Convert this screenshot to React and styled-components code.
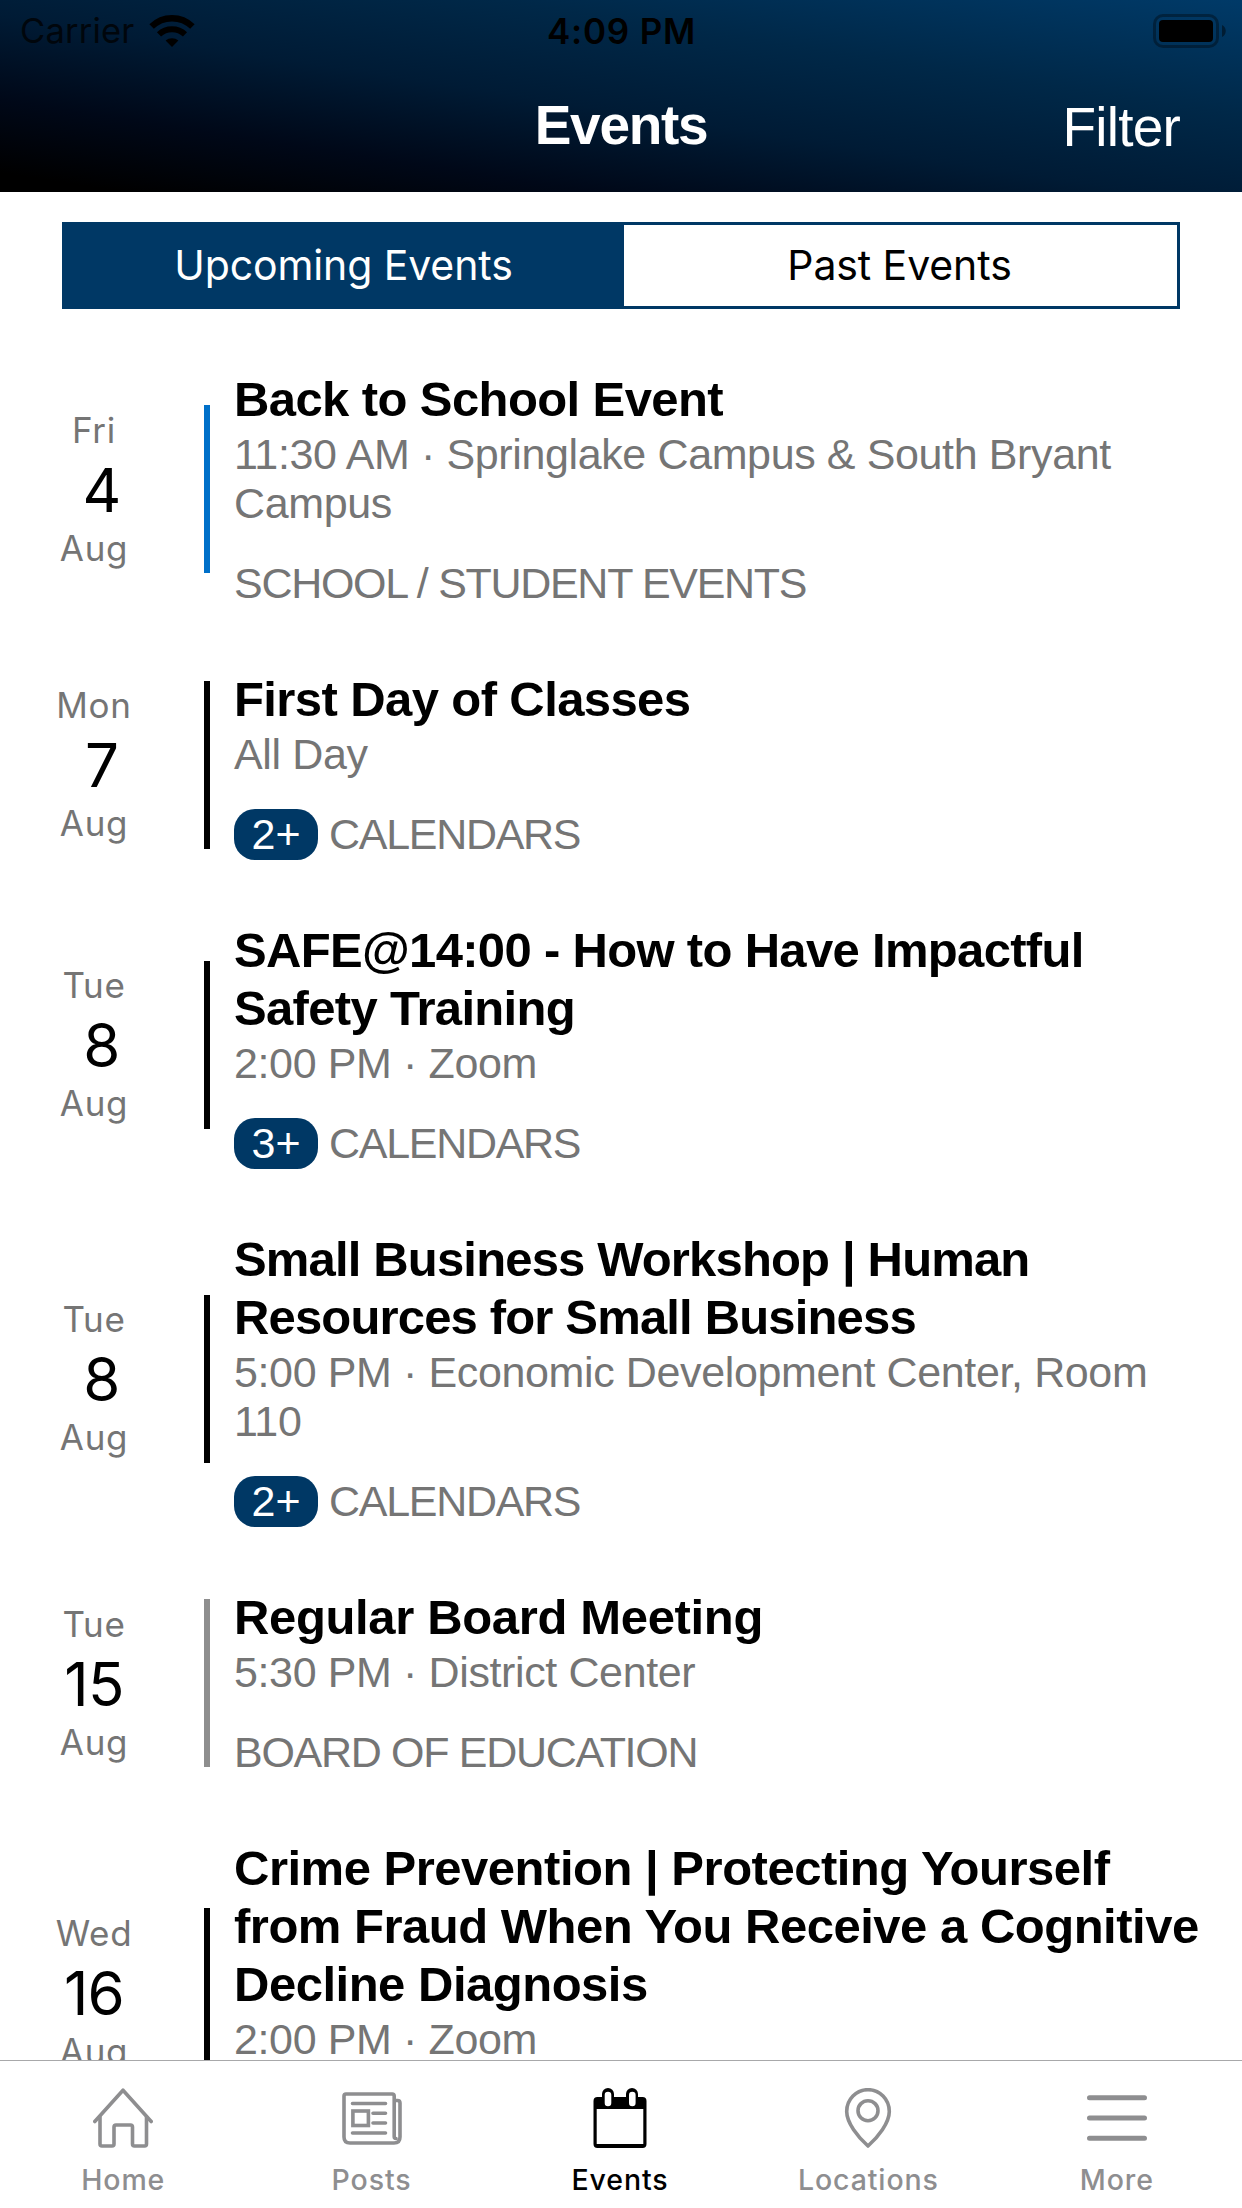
import React from "react";
import styled, { createGlobalStyle } from "styled-components";

const sans = `Inter, Roboto, sans-serif`;
const helv = `"Liberation Sans", Arial, sans-serif`;
const navy = "#003865";

const Global = createGlobalStyle`
  *{box-sizing:border-box}
  body{margin:0;background:#fff}
`;

const Screen = styled.div`
  width: 1242px;
  height: 2208px;
  display: flex;
  flex-direction: column;
  overflow: hidden;
  background: #fff;
  font-family: ${sans};
`;

const Header = styled.header`
  flex: none;
  height: 192px;
  background: linear-gradient(to top right, #000 5%, #000818 24%, #001b35 46%, #002848 70%, #003a68 100%);
`;

const StatusBar = styled.div`
  height: 60px;
  display: grid;
  grid-template-columns: 1fr auto 1fr;
  align-items: center;
  padding: 0 15px 0 20px;
  color: #000;
`;

const Carrier = styled.div`
  display: flex;
  align-items: center;
  gap: 14px;
  font-size: 34.5px;
  line-height: 62px;
  letter-spacing: 0.2px;
  color: #00060c;
`;

const Clock = styled.div`
  padding-right: 4px;
  font-size: 35px;
  font-weight: 600;
  line-height: 62px;
  letter-spacing: 0.8px;
`;

const StatusRight = styled.div`
  display: flex;
  justify-content: flex-end;
`;

const NavBar = styled.div`
  height: 132px;
  display: grid;
  grid-template-columns: 1fr auto 1fr;
  align-items: center;
  padding: 0 62px;
  color: #fff;
  font-family: ${helv};
`;

const NavTitle = styled.h1`
  grid-column: 2;
  margin: 0;
  font-size: 55px;
  font-weight: 700;
  line-height: 130px;
  padding-bottom: 2px;
  letter-spacing: -1.3px;
`;

const NavAction = styled.div`
  justify-self: end;
  padding-top: 3px;
  font-size: 55px;
  line-height: 129px;
  letter-spacing: -0.8px;
`;

const Segments = styled.div`
  flex: none;
  margin: 30px 62px 0;
  height: 87px;
  display: grid;
  grid-template-columns: 559px 1fr;
  border: 3px solid ${navy};
`;

const Segment = styled.div`
  display: flex;
  align-items: center;
  justify-content: center;
  padding: 0 2px 1px 0;
  font-size: 41px;
  letter-spacing: -0.1px;
  color: ${(p) => (p.$active ? "#fff" : "#000")};
  background: ${(p) => (p.$active ? navy : "#fff")};
`;

const List = styled.main`
  flex: 1;
  min-height: 0;
  overflow: hidden;
  padding-top: 29.75px;
`;

const Row = styled.article`
  display: grid;
  grid-template-columns: 188px 22px 1fr;
  align-items: center;
  padding: 31px 20px 30.1px 0;
`;

const DateBox = styled.div`
  display: flex;
  flex-direction: column;
  align-items: center;
  color: #757575;
  font-size: 35px;
  letter-spacing: 0.7px;
  line-height: 43px;
`;

const Day = styled.div`
  padding: 1px 0 0 ${(p) => (p.$single ? "15px" : "0")};
  font-size: 60px;
  line-height: 74px;
  letter-spacing: -0.8px;
  color: #000;
`;

const Bar = styled.div`
  width: 6px;
  height: 168px;
  justify-self: end;
  background: ${(p) => p.$color};
`;

const Info = styled.div`
  padding-left: 24px;
  font-family: ${helv};
  color: #757575;
`;

const Title = styled.h2`
  margin: 0;
  font-size: 49px;
  font-weight: 700;
  line-height: 58px;
  letter-spacing: ${(p) => p.$tracking}px;
  color: #000;
`;

const Detail = styled.p`
  margin: 2px 0 0;
  font-size: 43px;
  line-height: 49px;
  letter-spacing: -0.38px;
`;

const Category = styled.div`
  display: flex;
  gap: 11px;
  margin-top: 30px;
  height: 51px;
  font-size: 43px;
  line-height: 51px;
  letter-spacing: -1.3px;
`;

const Pill = styled.span`
  width: 84px;
  border-radius: 21px;
  text-align: center;
  letter-spacing: 0;
  color: #fff;
  background: ${navy};
`;

const TabBar = styled.nav`
  flex: none;
  height: 148px;
  display: grid;
  grid-template-columns: repeat(5, 1fr);
  border-top: 1px solid #a8a8aa;
  background: #fff;
`;

const Tab = styled.div`
  display: flex;
  flex-direction: column;
  align-items: center;
  padding: 27px 2px 0 0;
  gap: 15px;
  font-size: 28.5px;
  font-weight: 500;
  line-height: 34px;
  letter-spacing: 0.9px;
  color: ${(p) => (p.$active ? "#000" : "#8e8e90")};

  svg {
    display: block;
  }
`;

const Wifi = () => (
  <svg width="46" height="34" viewBox="0 0 46 34">
    <g fill="none" stroke="#000">
      <path d="M2.6 12.6A29 29 0 0 1 43.4 12.6" strokeWidth="6.4" />
      <path d="M10 20.4A19 19 0 0 1 36 20.4" strokeWidth="6" />
    </g>
    <path d="M16.6 26.6a9.6 9.6 0 0 1 12.8 0L23 33z" fill="#000" />
  </svg>
);

const Battery = () => (
  <svg width="74" height="34" viewBox="0 0 74 34">
    <rect x="1.5" y="1.5" width="63" height="31" rx="8.5" fill="none" stroke="#000" strokeOpacity=".35" strokeWidth="3" />
    <rect x="6" y="6" width="54" height="22" rx="4" fill="#000" />
    <path d="M69 11c5 2 5 10 0 12z" fill="#000" fillOpacity=".45" />
  </svg>
);

const Icon = ({ children }) => (
  <svg width="60" height="60" viewBox="0 0 60 60" fill="none" stroke="currentColor" strokeWidth="3.6" strokeLinecap="round" strokeLinejoin="round">
    {children}
  </svg>
);

const HomeIcon = () => (
  <Icon>
    <path d="M1.8 33.5L30 2.2 58.2 33.5" />
    <path d="M7 29v27q0 2 2 2h10q2 0 2-2V39q0-2 2-2h14.500q2 0 2 2v17q0 2 2 2H51.500q2 0 2-2V29" />
  </Icon>
);

const PostsIcon = () => (
  <Icon>
    <path d="M54 50.500q-1.800 0-1.800-2V8q0-2-2-2H4q-2 0-2 2v41q0 6 6 6h44q6 0 6-6V15q0-2.500-2.500-2.500H52.500" />
    <path d="M10.500 15.500h33M31 25.300h12.500M31 35h12.500M10.500 45h33" />
    <rect x="10.900" y="23" width="15.500" height="14.500" strokeLinejoin="miter" />
  </Icon>
);

const EventsIcon = () => (
  <svg width="60" height="60" viewBox="0 0 60 60">
    <path
      fill="currentColor"
      fillRule="evenodd"
      d="M7.500 9H12V6a6 6 0 0 1 12 0v3h12V6a6 6 0 0 1 12 0v3h4.500q4 0 4 4v43q0 4-4 4h-45q-4 0-4-4V13q0-4 4-4zM6.700 21v35h46.600V21zM14.700 7v8a3.300 3.300 0 0 0 6.600 0V7a3.300 3.300 0 0 0-6.600 0zM39 7v8a3.300 3.300 0 0 0 6.600 0V7a3.300 3.300 0 0 0-6.600 0z"
    />
  </svg>
);

const LocationsIcon = () => (
  <Icon>
    <path d="M30 58C20 49 8.700 35 8.700 23.500a21.300 21.800 0 0 1 42.600 0C51.300 35 40 49 30 58z" />
    <circle cx="30" cy="22.700" r="10" />
  </Icon>
);

const MoreIcon = () => (
  <Icon>
    <path d="M2.500 9.700h55M2.500 30h55M2.500 50.300h55" strokeWidth="5" />
  </Icon>
);

const events = [
  { wd: "Fri", day: "4", color: "#0070c9", title: "Back to School Event", tracking: -0.6, detail: "11:30 AM · Springlake Campus & South Bryant Campus", category: "SCHOOL / STUDENT EVENTS" },
  { wd: "Mon", day: "7", color: "#000", title: "First Day of Classes", tracking: -0.6, detail: "All Day", count: "2+", category: "CALENDARS" },
  { wd: "Tue", day: "8", color: "#000", title: "SAFE@14:00 - How to Have Impactful Safety Training", tracking: -0.68, detail: "2:00 PM · Zoom", count: "3+", category: "CALENDARS" },
  { wd: "Tue", day: "8", color: "#000", title: "Small Business Workshop | Human Resources for Small Business", tracking: -0.84, detail: "5:00 PM · Economic Development Center, Room 110", count: "2+", category: "CALENDARS" },
  { wd: "Tue", day: "15", color: "#8e8e8e", title: "Regular Board Meeting", tracking: -0.35, detail: "5:30 PM · District Center", category: "BOARD OF EDUCATION" },
  { wd: "Wed", day: "16", color: "#000", title: "Crime Prevention | Protecting Yourself from Fraud When You Receive a Cognitive Decline Diagnosis", tracking: -0.49, detail: "2:00 PM · Zoom" },
];

const tabs = [
  { label: "Home", Glyph: HomeIcon },
  { label: "Posts", Glyph: PostsIcon },
  { label: "Events", Glyph: EventsIcon, active: true },
  { label: "Locations", Glyph: LocationsIcon },
  { label: "More", Glyph: MoreIcon },
];

export default function App() {
  return (
    <Screen>
      <Global />
      <Header>
        <StatusBar>
          <Carrier>
            Carrier <Wifi />
          </Carrier>
          <Clock>4:09 PM</Clock>
          <StatusRight>
            <Battery />
          </StatusRight>
        </StatusBar>
        <NavBar>
          <NavTitle>Events</NavTitle>
          <NavAction>Filter</NavAction>
        </NavBar>
      </Header>
      <Segments>
        <Segment $active>Upcoming Events</Segment>
        <Segment>Past Events</Segment>
      </Segments>
      <List>
        {events.map((e, i) => (
          <Row key={i}>
            <DateBox>
              <div>{e.wd}</div>
              <Day $single={e.day.length === 1}>{e.day}</Day>
              <div>Aug</div>
            </DateBox>
            <Bar $color={e.color} />
            <Info>
              <Title $tracking={e.tracking}>{e.title}</Title>
              <Detail>{e.detail}</Detail>
              <Category>
                {e.count && <Pill>{e.count}</Pill>}
                {e.category}
              </Category>
            </Info>
          </Row>
        ))}
      </List>
      <TabBar>
        {tabs.map(({ label, Glyph, active }) => (
          <Tab key={label} $active={active}>
            <Glyph />
            {label}
          </Tab>
        ))}
      </TabBar>
    </Screen>
  );
}
